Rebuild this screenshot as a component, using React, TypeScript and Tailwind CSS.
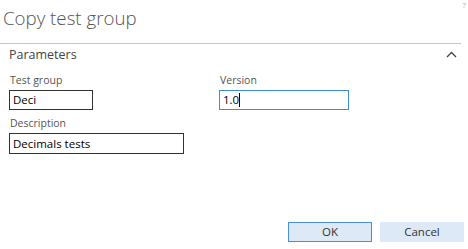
export default function App() {
  return (
    <div className="relative w-[468px] h-[249px] bg-white overflow-hidden font-['Open_Sans','Noto_Sans',sans-serif] text-[#333]">
      {/* help glyph at the corner */}
      <span className="absolute right-[2px] top-0 text-[8px] leading-[10px] text-[#aaa]">?</span>

      <div className="flex flex-col h-full">
        <div className="h-[43px] pl-[3px] pt-[4px] text-[18.7px] font-light leading-[28px] text-[#555]">
          Copy test group
        </div>

        <div className="mr-[7px] border-t border-[#c8c8c8]" />

        <div className="flex items-center justify-between pl-[9px] pr-[11px] h-[22px]">
          <span className="text-[12.5px] leading-[16px] text-[#444]">Parameters</span>
          <svg width="11" height="7" viewBox="0 0 11 7" className="mt-[-2px]">
            <path d="M1 6 L5.5 1.5 L10 6" fill="none" stroke="#444" strokeWidth="1.3" />
          </svg>
        </div>

        <div className="flex pl-[9px] pt-[7px]">
          <div className="flex flex-col">
            <span className="text-[10.5px] leading-[14px] pl-[1px] text-[#555]">Test group</span>
            <div className="mt-[3px] w-[84px] h-[20px] border border-[#333] pl-[3px] text-[11.5px] leading-[18px] text-black">
              Deci
            </div>
          </div>
          <div className="flex flex-col ml-[126px]">
            <span className="text-[10.5px] leading-[14px] pl-[1px] text-[#555]">Version</span>
            <div className="mt-[3px] w-[130px] h-[20px] border border-[#3a8fd9] pl-[3px] text-[11.5px] leading-[18px] text-black flex items-center">
              <span>1.0</span>
              <span className="w-[1px] h-[14px] bg-black" />
            </div>
          </div>
        </div>

        <div className="flex flex-col pl-[9px] pt-[6px]">
          <span className="text-[10.5px] leading-[14px] pl-[1px] text-[#555]">Description</span>
          <div className="mt-[3px] w-[175px] h-[21px] border border-[#333] pl-[3px] text-[11.5px] leading-[19px] text-black">
            Decimals tests
          </div>
        </div>

        <div className="mt-auto mb-[7px] flex justify-end gap-[8px] pr-[4px]">
          <button className="w-[84px] h-[20px] bg-[#dde9f6] border border-[#4a90d9] text-[11.5px] leading-[18px] text-[#333]">
            OK
          </button>
          <button className="w-[84px] h-[20px] bg-[#dde9f6] text-[11.5px] leading-[20px] text-[#333]">
            Cancel
          </button>
        </div>
      </div>
    </div>
  );
}
